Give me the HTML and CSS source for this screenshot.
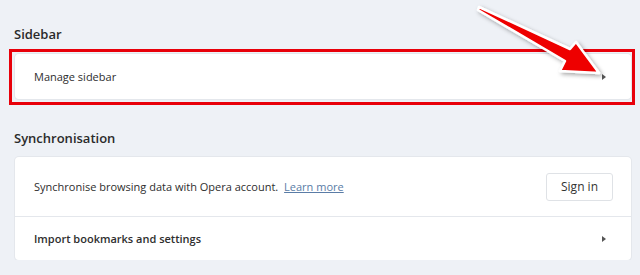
FILE: index.html
```html
<!DOCTYPE html>
<html lang="en">
<head>
  <meta charset="UTF-8">
  <title>Settings</title>
  <link rel="stylesheet" href="styles.css">
</head>
<body>
  <div class="page">
    <h2 class="section-title">Sidebar</h2>
    <div class="card highlight">
      <div class="row row-link">
        <span class="row-label">Manage sidebar</span>
        <span class="chevron"></span>
      </div>
    </div>

    <h2 class="section-title second">Synchronisation</h2>
    <div class="card">
      <div class="row row-sync">
        <span class="row-label">Synchronise browsing data with Opera account. <a href="#" class="learn">Learn more</a></span>
        <button class="btn">Sign in</button>
      </div>
      <div class="row row-link row-strong">
        <span class="row-label">Import bookmarks and settings</span>
        <span class="chevron"></span>
      </div>
    </div>
  </div>

  <svg class="annotation" width="640" height="275" viewBox="0 0 640 275">
    <defs>
      <filter id="shadow" x="-20%" y="-20%" width="140%" height="140%">
        <feDropShadow dx="2" dy="2" stdDeviation="2" flood-color="#000" flood-opacity="0.35"/>
      </filter>
    </defs>
    <polygon points="479,7 570,49 576,42 599,73 560,71 565,61 478,10"
             fill="#ee0000" stroke="#fff" stroke-width="2.5" stroke-linejoin="round" filter="url(#shadow)"/>
  </svg>
</body>
</html>
```

FILE: styles.css
```css
body {
  margin: 0;
  background-color: #eef1f6;
  font-family: "Open Sans", "Noto Sans", sans-serif;
  color: #2e2e2e;
}

.page {
  padding: 25px 9px 0 15px;
}

.section-title {
  margin: 0 0 11px -1px;
  font-size: 13px;
  font-weight: 600;
  line-height: 18px;
  color: #2a2a2a;
}

.section-title.second {
  margin-top: 30px;
  margin-bottom: 10px;
}

.card {
  position: relative;
  background-color: #fff;
  border-radius: 4px;
  box-shadow: 0 0 0 1px #e4e7ec, 0 1px 2px rgba(0, 0, 0, 0.05);
}

.highlight::after {
  content: "";
  position: absolute;
  top: -5px;
  left: -6px;
  right: -4px;
  bottom: -6px;
  border: 3px solid #e8000a;
}

.row {
  display: flex;
  align-items: center;
  justify-content: space-between;
  padding: 0 18px 0 19px;
  font-size: 11px;
}

.row-link {
  height: 45px;
  padding-right: 25px;
}

.row-sync {
  height: 59px;
  border-bottom: 1px solid #e4e7ec;
}

.row-strong .row-label {
  font-weight: 600;
}

.row-strong {
  height: 43px;
}

.learn {
  margin-left: 3px;
  color: #5a7ca6;
  text-decoration: underline;
}

.btn {
  width: 67px;
  height: 28px;
  background-color: #fff;
  border: 1px solid #dfe2e6;
  border-radius: 3px;
  font-family: inherit;
  font-size: 12px;
  color: #333;
  cursor: pointer;
}

.chevron {
  width: 0;
  height: 0;
  border-top: 3.5px solid transparent;
  border-bottom: 3.5px solid transparent;
  border-left: 4px solid #555;
}

.annotation {
  position: absolute;
  top: 0;
  left: 0;
  pointer-events: none;
}
```
